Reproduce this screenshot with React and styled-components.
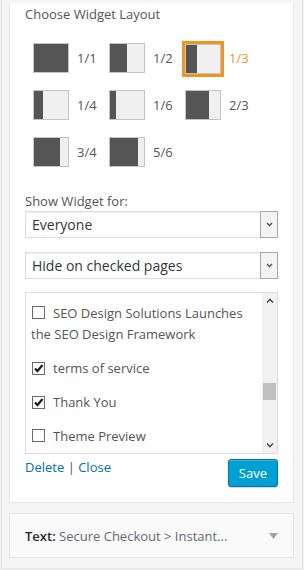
import React from "react";
import styled, { createGlobalStyle } from "styled-components";

const GlobalStyle = createGlobalStyle`
  html, body {
    margin: 0;
    padding: 0;
    background: #f1f1f1;
  }
  body {
    font-family: "Open Sans", "Liberation Sans", sans-serif;
    font-size: 13px;
    color: #555;
  }
`;

const layouts = [
  { label: "1/1", fill: 1 },
  { label: "1/2", fill: 1 / 2 },
  { label: "1/3", fill: 1 / 3, selected: true },
  { label: "1/4", fill: 1 / 4 },
  { label: "1/6", fill: 1 / 6 },
  { label: "2/3", fill: 2 / 3 },
  { label: "3/4", fill: 3 / 4 },
  { label: "5/6", fill: 5 / 6 },
];

const pages = [
  { title: "SEO Design Solutions Launches the SEO Design Framework", checked: false },
  { title: "terms of service", checked: true },
  { title: "Thank You", checked: true },
  { title: "Theme Preview", checked: false },
];

const ORANGE = "#f0961e";

const Holder = styled.div`
  box-sizing: border-box;
  width: 302px;
  margin-left: 1px;
  padding: 3px 8px 10px 7px;
  background: #f5f5f5;
  border: 1px solid #e5e5e5;
  border-top: none;
`;

const WidgetInside = styled.div`
  background: #fff;
  border: 1px solid #e5e5e5;
  border-top: none;
  padding: 2px 15px 15px;
`;

const Heading = styled.div`
  line-height: 18px;
  color: #555;
`;

const LayoutGrid = styled.div`
  display: grid;
  grid-template-columns: repeat(3, 76px);
  row-gap: 17px;
  margin: 20px 0 0 8px;
`;

const LayoutOption = styled.div`
  display: flex;
  align-items: center;
  gap: 8px;
  height: 30px;
`;

const LayoutIcon = styled.div`
  box-sizing: border-box;
  width: 36px;
  height: 30px;
  border: 1px solid #c4c4c4;
  background: #f0f0f0;
  display: flex;
  outline: ${(p) => (p.$selected ? `3px solid ${ORANGE}` : "none")};
  outline-offset: 0;
  margin-top: ${(p) => (p.$selected ? "2px" : "0")};
`;

const LayoutBar = styled.div`
  height: 100%;
  background: #555;
`;

const LayoutLabel = styled.span`
  color: ${(p) => (p.$selected ? ORANGE : "#555")};
  line-height: 18px;
`;

const FieldLabel = styled.div`
  margin-top: 25px;
  margin-bottom: 1px;
  line-height: 18px;
`;

const Select = styled.div`
  box-sizing: border-box;
  display: flex;
  align-items: center;
  height: 27px;
  border: 1px solid #ddd;
  box-shadow: inset 0 1px 2px rgba(0, 0, 0, 0.07);
  background: #fff;
  margin-top: ${(p) => p.$gap || 0}px;
`;

const SelectValue = styled.span`
  flex: 1;
  padding-left: 6px;
  font-size: 14px;
  color: #32373c;
`;

const SelectArrow = styled.span`
  box-sizing: border-box;
  align-self: stretch;
  width: 18px;
  margin: -1px -1px -1px 0;
  border: 1px solid #a9a9a9;
  background: #f3f3f3;
  display: flex;
  align-items: center;
  justify-content: center;
`;

const Checklist = styled.div`
  box-sizing: border-box;
  display: flex;
  height: 162px;
  margin-top: 13px;
  border: 1px solid #ddd;
  background: #fff;
  overflow: hidden;
`;

const ChecklistItems = styled.ul`
  flex: 1;
  list-style: none;
  margin: 0;
  padding: 10px 6px 0 5px;
`;

const ChecklistItem = styled.li`
  line-height: 21px;
  margin-bottom: 13px;
  color: #555;
`;

const Box = styled.span`
  box-sizing: border-box;
  display: inline-flex;
  align-items: center;
  justify-content: center;
  width: 13px;
  height: 13px;
  margin: 0 8px 0 1px;
  border: 1px solid #6a6a6a;
  background: #fff;
  vertical-align: -1px;
`;

const Scrollbar = styled.div`
  width: 15px;
  background: #f1f1f1;
  display: flex;
  flex-direction: column;
`;

const ScrollButton = styled.div`
  height: 15px;
  display: flex;
  align-items: center;
  justify-content: center;
`;

const ScrollTrack = styled.div`
  flex: 1;
`;

const ScrollThumb = styled.div`
  height: 17px;
  margin: 0 1px;
  background: #c1c1c1;
`;

const Actions = styled.div`
  display: flex;
  justify-content: space-between;
  align-items: flex-start;
  margin-top: 5px;
`;

const ActionLinks = styled.div`
  line-height: 18px;
  margin-top: -1px;
  color: #555;
`;

const ActionLink = styled.a`
  color: #0073aa;
  text-decoration: none;
`;

const SaveButton = styled.button`
  box-sizing: border-box;
  height: 28px;
  padding: 0 10px;
  font-family: "Open Sans", "Liberation Sans", sans-serif;
  font-size: 13px;
  line-height: 26px;
  color: #fff;
  background: #00a0d2;
  border: 1px solid #0073aa;
  border-radius: 3px;
  box-shadow: inset 0 1px 0 rgba(120, 200, 230, 0.5), 0 1px 0 rgba(0, 0, 0, 0.15);
  cursor: pointer;
`;

const WidgetTop = styled.div`
  box-sizing: border-box;
  height: 45px;
  margin-top: 10px;
  padding: 0 15px;
  display: flex;
  align-items: center;
  justify-content: space-between;
  background: #fafafa;
  border: 1px solid #e5e5e5;
`;

const WidgetTitle = styled.span`
  color: #606a73;
  strong {
    color: #23282d;
    font-weight: 600;
  }
`;

const Chevron = ({ up }) => (
  <svg width="8" height="5" viewBox="0 0 8 5">
    <path
      d={up ? "M1 4.5 L4 1.5 L7 4.5" : "M1 0.5 L4 3.5 L7 0.5"}
      fill="none"
      stroke="#505050"
      strokeWidth="1.6"
    />
  </svg>
);

const Check = () => (
  <svg width="11" height="11" viewBox="0 0 11 11">
    <path d="M2 5.5 L4.5 8 L9.5 2" fill="none" stroke="#1e1e1e" strokeWidth="2.2" />
  </svg>
);

const SmallSelect = ({ value, gap }) => (
  <Select $gap={gap}>
    <SelectValue>{value}</SelectValue>
    <SelectArrow>
      <svg width="7" height="5" viewBox="0 0 7 5">
        <path d="M1 1 L3.5 3.5 L6 1" fill="none" stroke="#555" strokeWidth="1.4" />
      </svg>
    </SelectArrow>
  </Select>
);

export default function App() {
  return (
    <>
      <GlobalStyle />
      <Holder>
        <WidgetInside>
          <Heading>Choose Widget Layout</Heading>
          <LayoutGrid>
            {layouts.map((l) => (
              <LayoutOption key={l.label}>
                <LayoutIcon $selected={l.selected}>
                  <LayoutBar style={{ width: `${l.fill * 100}%` }} />
                </LayoutIcon>
                <LayoutLabel $selected={l.selected}>{l.label}</LayoutLabel>
              </LayoutOption>
            ))}
          </LayoutGrid>

          <FieldLabel>Show Widget for:</FieldLabel>
          <SmallSelect value="Everyone" />
          <SmallSelect value="Hide on checked pages" gap={14} />

          <Checklist>
            <ChecklistItems>
              {pages.map((p) => (
                <ChecklistItem key={p.title}>
                  <Box>{p.checked && <Check />}</Box>
                  {p.title}
                </ChecklistItem>
              ))}
            </ChecklistItems>
            <Scrollbar>
              <ScrollButton>
                <Chevron up />
              </ScrollButton>
              <ScrollTrack>
                <ScrollThumb style={{ marginTop: 75 }} />
              </ScrollTrack>
              <ScrollButton>
                <Chevron />
              </ScrollButton>
            </Scrollbar>
          </Checklist>

          <Actions>
            <ActionLinks>
              <ActionLink href="#">Delete</ActionLink> | <ActionLink href="#">Close</ActionLink>
            </ActionLinks>
            <SaveButton>Save</SaveButton>
          </Actions>
        </WidgetInside>

        <WidgetTop>
          <WidgetTitle>
            <strong>Text:</strong> Secure Checkout &gt; Instant...
          </WidgetTitle>
          <svg width="9" height="6" viewBox="0 0 9 6">
            <path d="M0 0 L9 0 L4.5 6 Z" fill="#a0a5aa" />
          </svg>
        </WidgetTop>
      </Holder>
    </>
  );
}
